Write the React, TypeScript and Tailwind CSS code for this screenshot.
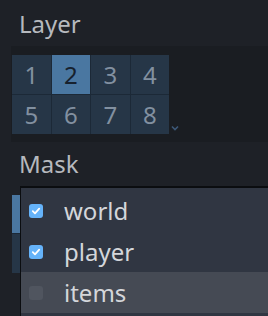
import React from "react";

const cells = [1, 2, 3, 4, 5, 6, 7, 8];

function Check({ on }: { on: boolean }) {
  return (
    <div
      className={`w-[14px] h-[14px] rounded-[3px] flex items-center justify-center ${
        on ? "bg-[#65b3fa]" : "bg-[#50555f]"
      }`}
    >
      {on && (
        <svg width="10" height="10" viewBox="0 0 10 10">
          <path d="M1.8 5.2 L4 7.3 L8.2 2.6" stroke="#ffffff" strokeWidth="1.8" fill="none" strokeLinecap="round" strokeLinejoin="round" />
        </svg>
      )}
    </div>
  );
}

export default function App() {
  const font = { fontFamily: '"Noto Sans", "Open Sans", sans-serif' };
  return (
    <div className="relative w-[268px] h-[316px] overflow-hidden bg-[#1e2127]" style={font}>
      <div className="pl-[19px] pt-[9px] h-[46px] text-[24px] leading-[30px] text-[#b6b9be]">Layer</div>
      <div className="h-[96px] bg-[#1a1d22] pl-[1px] ml-[11px] pt-[9px] flex items-start">
        <div className="grid grid-cols-4 gap-[1px] bg-[#1c2937] w-[157px]">
          {cells.map((n) => (
            <div
              key={n}
              className={`h-[39px] flex items-center justify-center text-[24px] ${
                n === 2 ? "bg-[#4a77a1] text-[#17212e]" : "bg-[#263647] text-[#8290a0]"
              }`}
            >
              {n}
            </div>
          ))}
        </div>
        <svg width="8" height="6" viewBox="0 0 8 6" className="ml-[2px] mt-[70px]">
          <path d="M1 1.5 L4 4.5 L7 1.5" stroke="#3d5878" strokeWidth="1.6" fill="none" />
        </svg>
      </div>
      <div className="pl-[19px] pt-[7px] h-[53px] text-[24px] leading-[30px] text-[#b6b9be]">Mask</div>
      <div className="ml-[12px] w-[60px]">
        <div className="h-[38px] bg-[#4a77a1]" />
        <div className="h-[1px] bg-[#1c2937]" />
        <div className="h-[39px] bg-[#263647]" />
      </div>

      <div className="absolute left-[20px] top-[186px] w-[260px] h-[140px] bg-[#303642] border border-[#0b0d10] border-t-2 pt-[2px]">
        {[
          { label: "world", on: true },
          { label: "player", on: true },
          { label: "items", on: false },
        ].map((r, i) => (
          <div
            key={r.label}
            className={`h-[41px] flex items-center pl-[8px] ${i === 2 ? "bg-[#454a54]" : ""}`}
          >
            <Check on={r.on} />
            <span className="ml-[21px] text-[24px] text-[#d4d6da] leading-none">{r.label}</span>
          </div>
        ))}
      </div>
    </div>
  );
}
